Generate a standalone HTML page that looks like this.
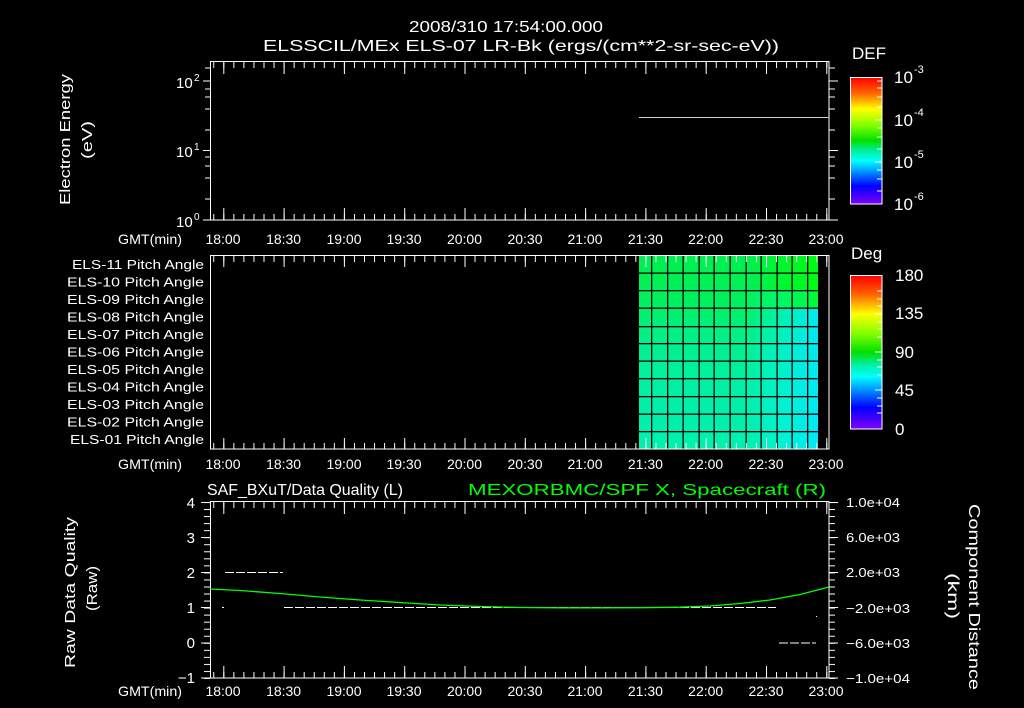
<!DOCTYPE html>
<html><head><meta charset="utf-8"><style>
html,body{margin:0;padding:0;background:#000;}
svg{display:block}
text{font-family:"Liberation Sans",sans-serif;fill:#fff;}
</style></head><body>
<svg width="1024" height="708" viewBox="0 0 1024 708" xmlns="http://www.w3.org/2000/svg">
<defs>
<pattern id="mn" x="223.3" y="0" width="10.05" height="708" patternUnits="userSpaceOnUse"><rect x="0" y="0" width="1" height="708" fill="#fff"/></pattern>
<pattern id="mj" x="223.3" y="0" width="60.3" height="708" patternUnits="userSpaceOnUse"><rect x="0" y="0" width="1" height="708" fill="#fff"/></pattern>
<pattern id="yt" x="0" y="502" width="20" height="7.04" patternUnits="userSpaceOnUse"><rect x="0" y="0" width="20" height="1" fill="#fff"/></pattern>
<linearGradient id="cb" x1="0" y1="0" x2="0" y2="1">
<stop offset="0" stop-color="#ff0000"/><stop offset="0.12" stop-color="#ff6000"/><stop offset="0.25" stop-color="#ffff00"/><stop offset="0.38" stop-color="#80ff00"/><stop offset="0.5" stop-color="#00e000"/><stop offset="0.58" stop-color="#00f0a0"/><stop offset="0.66" stop-color="#00ffff"/><stop offset="0.76" stop-color="#0080ff"/><stop offset="0.86" stop-color="#0000ff"/><stop offset="1" stop-color="#8000ff"/>
</linearGradient>
<linearGradient id="gv" x1="0" y1="0" x2="0" y2="1">
<stop offset="0" stop-color="#00f050"/><stop offset="0.2" stop-color="#00f058"/><stop offset="0.45" stop-color="#00f090"/><stop offset="0.7" stop-color="#00f0a8"/><stop offset="1" stop-color="#00f0b0"/>
</linearGradient>
<linearGradient id="gh" x1="0" y1="0" x2="1" y2="0">
<stop offset="0" stop-color="#00ffff" stop-opacity="0"/><stop offset="1" stop-color="#00e8ff" stop-opacity="0.9"/>
</linearGradient>
<linearGradient id="gt" x1="0" y1="0" x2="1" y2="0">
<stop offset="0" stop-color="#00ff00" stop-opacity="0"/><stop offset="1" stop-color="#00ff00" stop-opacity="0.8"/>
</linearGradient>
</defs>

<text x="409" y="32" font-size="16" textLength="194" lengthAdjust="spacingAndGlyphs">2008/310 17:54:00.000</text>
<text x="263" y="51" font-size="16" textLength="516" lengthAdjust="spacingAndGlyphs">ELSSCIL/MEx ELS-07 LR-Bk  (ergs/(cm**2-sr-sec-eV))</text>

<!-- PANEL 1 -->
<rect x="210.5" y="61.5" width="618.5" height="158.5" fill="none" stroke="#fff" stroke-width="1"/>
<rect x="210" y="62" width="619" height="6" fill="url(#mn)"/>
<rect x="210" y="62" width="619" height="12" fill="url(#mj)"/>
<rect x="210" y="214" width="619" height="6" fill="url(#mn)"/>
<rect x="210" y="208" width="619" height="12" fill="url(#mj)"/>
<path d="M203 81H210M203 150.5H210M203 220H210M205 199H210M205 178H210M205 166H210M205 157H210M205 130H210M205 109H210M205 97H210M205 89H210M205 68H210
M829 81H838M829 150.5H838M829 220H838M829 199H835M829 178H835M829 166H835M829 157H835M829 130H835M829 109H835M829 97H835M829 89H835M829 68H835" stroke="#fff" stroke-width="1"/>
<line x1="639" y1="117.5" x2="829" y2="117.5" stroke="#c8d0d0" stroke-width="1"/>
<text x="176" y="88" font-size="15">10</text><text x="194" y="81" font-size="10">2</text>
<text x="176" y="157" font-size="15">10</text><text x="194" y="150" font-size="10">1</text>
<text x="176" y="227" font-size="15">10</text><text x="194" y="220" font-size="10">0</text>
<text transform="translate(70,205) rotate(-90)" font-size="15" textLength="131" lengthAdjust="spacingAndGlyphs">Electron Energy</text>
<text transform="translate(92,159) rotate(-90)" font-size="15" textLength="38" lengthAdjust="spacingAndGlyphs">(eV)</text>
<g font-size="14" text-anchor="middle">
<text x="223" y="244">18:00</text><text x="283.6" y="244">18:30</text><text x="344" y="244">19:00</text><text x="404" y="244">19:30</text><text x="464.5" y="244">20:00</text><text x="525" y="244">20:30</text><text x="585" y="244">21:00</text><text x="645.4" y="244">21:30</text><text x="705.7" y="244">22:00</text><text x="766" y="244">22:30</text><text x="826" y="244">23:00</text>
</g>
<text x="118" y="244" font-size="14" textLength="64" lengthAdjust="spacingAndGlyphs">GMT(min)</text>
<text x="852" y="59" font-size="17">DEF</text>
<rect x="850.5" y="77.5" width="31.5" height="126.5" fill="url(#cb)" stroke="#fff" stroke-width="1"/>
<path d="M877 81H882M877 88H882M877 97H882M877 107H882M875 120H882M877 128H882M877 137H882M877 149H882M875 162H882M877 170H882M877 179H882M877 191H882" stroke="#fff"/>
<text x="894" y="83" font-size="17">10</text><text x="914" y="73" font-size="11">-3</text>
<text x="894" y="126" font-size="17">10</text><text x="914" y="116" font-size="11">-4</text>
<text x="894" y="168" font-size="17">10</text><text x="914" y="158" font-size="11">-5</text>
<text x="894" y="210" font-size="17">10</text><text x="914" y="200" font-size="11">-6</text>

<!-- PANEL 2 -->
<rect x="639" y="256" width="179" height="193" fill="url(#gv)"/>
<rect x="746" y="290" width="72" height="159" fill="url(#gh)"/>
<rect x="746" y="256" width="72" height="52" fill="url(#gt)"/>
<g fill="#000">
<rect x="651" y="256" width="1.3" height="193"/><rect x="667" y="256" width="1.3" height="193"/><rect x="682.5" y="256" width="1.3" height="193"/><rect x="698.5" y="256" width="1.3" height="193"/><rect x="713.5" y="256" width="1.3" height="193"/><rect x="729.5" y="256" width="1.3" height="193"/><rect x="745.5" y="256" width="1.3" height="193"/><rect x="760.5" y="256" width="1.3" height="193"/><rect x="776.5" y="256" width="1.3" height="193"/><rect x="791.5" y="256" width="1.3" height="193"/><rect x="807" y="256" width="1.3" height="193"/>
<rect x="639" y="272.5" width="179" height="1.3"/><rect x="639" y="290" width="179" height="1.3"/><rect x="639" y="307.5" width="179" height="1.3"/><rect x="639" y="326" width="179" height="1.3"/><rect x="639" y="343" width="179" height="1.3"/><rect x="639" y="360.5" width="179" height="1.3"/><rect x="639" y="378" width="179" height="1.3"/><rect x="639" y="396" width="179" height="1.3"/><rect x="639" y="413.5" width="179" height="1.3"/><rect x="639" y="431" width="179" height="1.3"/>
</g>
<rect x="210.5" y="255.5" width="618.5" height="193.5" fill="none" stroke="#fff" stroke-width="1"/>
<rect x="210" y="256" width="619" height="6" fill="url(#mn)"/>
<rect x="210" y="256" width="619" height="11" fill="url(#mj)"/>
<rect x="210" y="443" width="619" height="6" fill="url(#mn)"/>
<rect x="210" y="438" width="619" height="11" fill="url(#mj)"/>
<g font-size="13">
<text x="72" y="269" textLength="132" lengthAdjust="spacingAndGlyphs">ELS-11 Pitch Angle</text>
<text x="67" y="286.5" textLength="137" lengthAdjust="spacingAndGlyphs">ELS-10 Pitch Angle</text>
<text x="67" y="304" textLength="137" lengthAdjust="spacingAndGlyphs">ELS-09 Pitch Angle</text>
<text x="67" y="321.5" textLength="137" lengthAdjust="spacingAndGlyphs">ELS-08 Pitch Angle</text>
<text x="67" y="339" textLength="137" lengthAdjust="spacingAndGlyphs">ELS-07 Pitch Angle</text>
<text x="67" y="356.5" textLength="137" lengthAdjust="spacingAndGlyphs">ELS-06 Pitch Angle</text>
<text x="67" y="374" textLength="137" lengthAdjust="spacingAndGlyphs">ELS-05 Pitch Angle</text>
<text x="67" y="391.5" textLength="137" lengthAdjust="spacingAndGlyphs">ELS-04 Pitch Angle</text>
<text x="67" y="409" textLength="137" lengthAdjust="spacingAndGlyphs">ELS-03 Pitch Angle</text>
<text x="67" y="426.5" textLength="137" lengthAdjust="spacingAndGlyphs">ELS-02 Pitch Angle</text>
<text x="70" y="444" textLength="134" lengthAdjust="spacingAndGlyphs">ELS-01 Pitch Angle</text>
</g>
<g font-size="14" text-anchor="middle">
<text x="223" y="469">18:00</text><text x="283.6" y="469">18:30</text><text x="344" y="469">19:00</text><text x="404" y="469">19:30</text><text x="464.5" y="469">20:00</text><text x="525" y="469">20:30</text><text x="585" y="469">21:00</text><text x="645.4" y="469">21:30</text><text x="705.7" y="469">22:00</text><text x="766" y="469">22:30</text><text x="826" y="469">23:00</text>
</g>
<text x="118" y="469" font-size="14" textLength="64" lengthAdjust="spacingAndGlyphs">GMT(min)</text>
<text x="851" y="259" font-size="17">Deg</text>
<rect x="850.5" y="275.5" width="31.5" height="153.5" fill="url(#cb)" stroke="#fff" stroke-width="1"/>
<path d="M877 291H882M877 299H882M877 306H882M875 314H882M877 322H882M877 329H882M877 337H882M875 352H882M877 360H882M877 367H882M877 375H882M875 390H882M877 398H882M877 406H882M877 413H882" stroke="#fff"/>
<g font-size="17"><text x="895" y="281">180</text><text x="895" y="319">135</text><text x="895" y="358">90</text><text x="895" y="396">45</text><text x="895" y="435">0</text></g>

<!-- PANEL 3 -->
<text x="207" y="495" font-size="16" textLength="196" lengthAdjust="spacingAndGlyphs">SAF_BXuT/Data Quality (L)</text>
<text x="468" y="495" font-size="16" style="fill:#00ff00" textLength="358" lengthAdjust="spacingAndGlyphs">MEXORBMC/SPF X, Spacecraft (R)</text>
<rect x="210.5" y="501.5" width="618.5" height="176.5" fill="none" stroke="#fff" stroke-width="1"/>
<rect x="210" y="502" width="619" height="6" fill="url(#mn)"/>
<rect x="210" y="502" width="619" height="12" fill="url(#mj)"/>
<rect x="210" y="672" width="619" height="6" fill="url(#mn)"/>
<rect x="210" y="666" width="619" height="12" fill="url(#mj)"/>
<rect x="204" y="502" width="6" height="177" fill="url(#yt)"/>
<rect x="829" y="502" width="6" height="177" fill="url(#yt)"/>
<path d="M201 502.5H210M201 537.5H210M201 572.5H210M201 607.5H210M201 643H210M201 678H210M829 502.5H838M829 537.5H838M829 572.5H838M829 607.5H838M829 643H838M829 678H838" stroke="#fff"/>
<g font-size="15" text-anchor="end">
<text x="195" y="508">4</text><text x="195" y="543">3</text><text x="195" y="578">2</text><text x="195" y="613">1</text><text x="195" y="648">0</text><text x="195" y="683">−1</text>
</g>
<g font-size="13">
<text x="846" y="507" textLength="54" lengthAdjust="spacingAndGlyphs">1.0e+04</text><text x="846" y="542" textLength="54" lengthAdjust="spacingAndGlyphs">6.0e+03</text><text x="846" y="577" textLength="54" lengthAdjust="spacingAndGlyphs">2.0e+03</text><text x="846" y="613" textLength="64" lengthAdjust="spacingAndGlyphs">−2.0e+03</text><text x="846" y="648" textLength="64" lengthAdjust="spacingAndGlyphs">−6.0e+03</text><text x="846" y="683" textLength="64" lengthAdjust="spacingAndGlyphs">−1.0e+04</text>
</g>
<path d="M225 572.5H283M284 607.5H776M779 643H816" stroke="#fff" stroke-width="1" stroke-dasharray="9 2"/>
<rect x="222" y="607" width="2" height="1" fill="#fff"/>
<rect x="816" y="616" width="1" height="1" fill="#fff"/>
<polyline fill="none" stroke="#00ff00" stroke-width="1.3" points="210,589 240,590.5 280,593.5 320,597 360,600 400,602.5 440,605 480,606.5 520,607.5 560,607.8 600,607.8 640,607.7 680,607.2 710,606 740,603.5 770,600 800,594.5 829,587"/>
<text transform="translate(75,668) rotate(-90)" font-size="15" textLength="151" lengthAdjust="spacingAndGlyphs">Raw Data Quality</text>
<text transform="translate(97,611) rotate(-90)" font-size="15" textLength="45" lengthAdjust="spacingAndGlyphs">(Raw)</text>
<text transform="translate(969,504) rotate(90)" font-size="16" textLength="186" lengthAdjust="spacingAndGlyphs">Component Distance</text>
<text transform="translate(948,573) rotate(90)" font-size="16" textLength="46" lengthAdjust="spacingAndGlyphs">(km)</text>
<g font-size="14" text-anchor="middle">
<text x="223" y="696">18:00</text><text x="283.6" y="696">18:30</text><text x="344" y="696">19:00</text><text x="404" y="696">19:30</text><text x="464.5" y="696">20:00</text><text x="525" y="696">20:30</text><text x="585" y="696">21:00</text><text x="645.4" y="696">21:30</text><text x="705.7" y="696">22:00</text><text x="766" y="696">22:30</text><text x="826" y="696">23:00</text>
</g>
<text x="118" y="696" font-size="14" textLength="64" lengthAdjust="spacingAndGlyphs">GMT(min)</text>
</svg>
</body></html>
